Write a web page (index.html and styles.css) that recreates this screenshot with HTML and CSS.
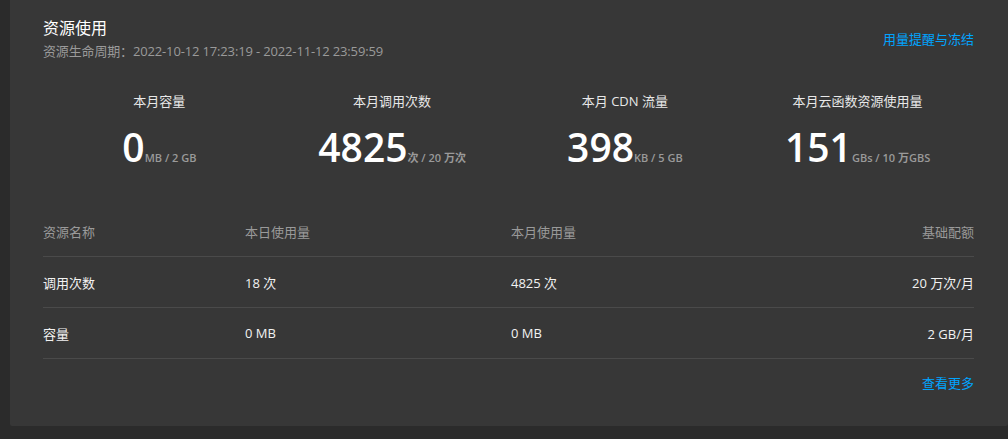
FILE: index.html
```html
<!DOCTYPE html>
<html lang="zh-CN">
<head>
<meta charset="utf-8">
<title>资源使用</title>
<link rel="stylesheet" href="styles.css">
</head>
<body>
<section class="card">
  <header class="card-head">
    <div class="head-text">
      <h2 class="title">资源使用</h2>
      <p class="period">资源生命周期：2022-10-12 17:23:19 - 2022-11-12 23:59:59</p>
    </div>
    <a class="link" href="#">用量提醒与冻结</a>
  </header>

  <div class="stats">
    <div class="stat">
      <div class="stat-label">本月容量</div>
      <div class="stat-value"><span class="num">0</span><span class="unit">MB / 2 GB</span></div>
    </div>
    <div class="stat">
      <div class="stat-label">本月调用次数</div>
      <div class="stat-value"><span class="num">4825</span><span class="unit">次 / 20 万次</span></div>
    </div>
    <div class="stat">
      <div class="stat-label">本月 CDN 流量</div>
      <div class="stat-value"><span class="num">398</span><span class="unit">KB / 5 GB</span></div>
    </div>
    <div class="stat">
      <div class="stat-label">本月云函数资源使用量</div>
      <div class="stat-value"><span class="num">151</span><span class="unit">GBs / 10 万GBS</span></div>
    </div>
  </div>

  <div class="table">
    <div class="row head">
      <div class="cell">资源名称</div>
      <div class="cell">本日使用量</div>
      <div class="cell">本月使用量</div>
      <div class="cell right">基础配额</div>
    </div>
    <div class="row">
      <div class="cell">调用次数</div>
      <div class="cell">18 次</div>
      <div class="cell">4825 次</div>
      <div class="cell right">20 万次/月</div>
    </div>
    <div class="row">
      <div class="cell">容量</div>
      <div class="cell">0 MB</div>
      <div class="cell">0 MB</div>
      <div class="cell right">2 GB/月</div>
    </div>
  </div>

  <footer class="card-foot">
    <a class="link" href="#">查看更多</a>
  </footer>
</section>
</body>
</html>
```

FILE: styles.css
```css
html, body {
  margin: 0;
  padding: 0;
  background: #2b2b2b;
  font-family: "Open Sans", "Noto Sans CJK SC", sans-serif;
  color: #ffffff;
}

.card {
  margin: 0 0 13px 10px;
  padding: 16px 34px 0 33px;
  background: #373737;
  border-radius: 0 0 2px 2px;
}

.card-head {
  display: flex;
  justify-content: space-between;
  align-items: center;
}

.title {
  margin: 0;
  font-size: 16px;
  line-height: 24px;
  font-weight: 400;
  color: #ffffff;
}

.period {
  margin: 1px 0 0;
  font-size: 13px;
  line-height: 20px;
  letter-spacing: -0.15px;
  color: #9a9a9a;
}

.link {
  font-size: 13px;
  line-height: 20px;
  color: #00a4ff;
  text-decoration: none;
}

.stats {
  display: grid;
  grid-template-columns: repeat(4, 1fr);
  margin-top: 30px;
}

.stat {
  text-align: center;
}

.stat-label {
  font-size: 13px;
  line-height: 20px;
  color: #e8e8e8;
}

.stat-value {
  margin-top: 12px;
  line-height: 48px;
}

.num {
  font-size: 39px;
  font-weight: 600;
  color: #ffffff;
}

.unit {
  font-size: 11px;
  font-weight: 600;
  color: #9a9a9a;
}

.table {
  margin-top: 24px;
}

.row {
  display: grid;
  grid-template-columns: 202px 266px 1fr auto;
  align-items: center;
  height: 50px;
  border-bottom: 1px solid #4a4a4a;
  font-size: 13px;
  color: #f2f2f2;
}

.row.head {
  color: #9a9a9a;
}

.cell.right {
  text-align: right;
}

.card-foot {
  display: flex;
  justify-content: flex-end;
  padding: 14px 0 33px;
}
```
